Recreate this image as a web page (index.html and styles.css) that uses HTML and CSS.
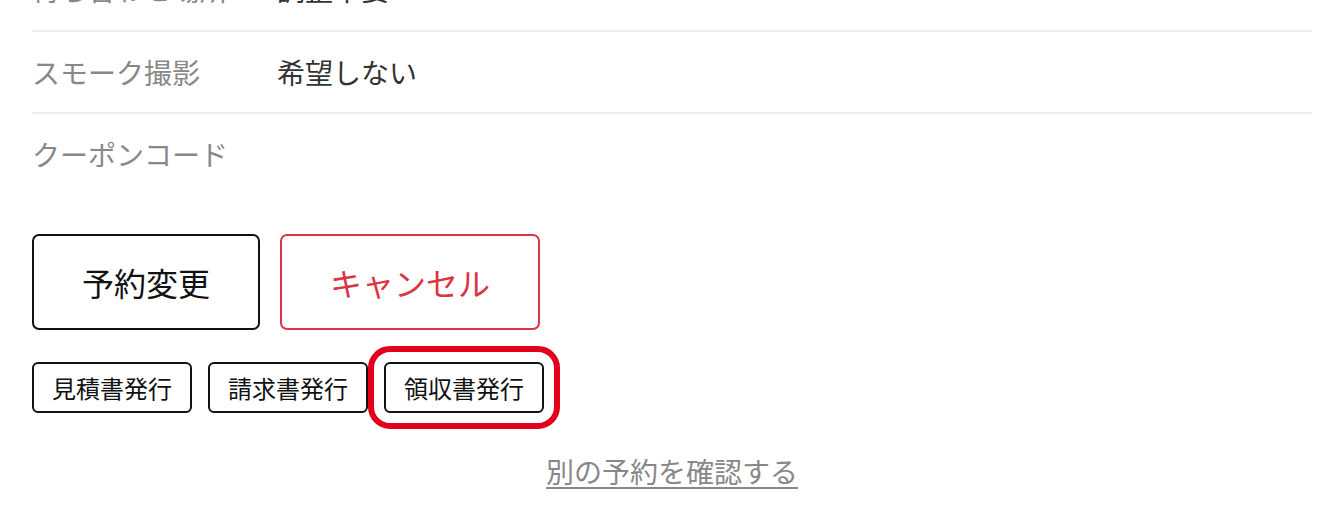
FILE: index.html
```html
<!DOCTYPE html>
<html lang="ja">
<head>
<meta charset="utf-8">
<title>予約確認</title>
<link rel="stylesheet" href="styles.css">
</head>
<body>
<main class="page">
  <dl class="details">
    <div class="row">
      <dt class="label">待ち合わせ場所</dt>
      <dd class="value">調整不要</dd>
    </div>
    <div class="row">
      <dt class="label">スモーク撮影</dt>
      <dd class="value">希望しない</dd>
    </div>
    <div class="row">
      <dt class="label">クーポンコード</dt>
      <dd class="value"></dd>
    </div>
  </dl>

  <div class="main-actions">
    <button class="btn-large">予約変更</button>
    <button class="btn-large btn-danger">キャンセル</button>
  </div>

  <div class="doc-actions">
    <button class="btn-small">見積書発行</button>
    <button class="btn-small">請求書発行</button>
    <button class="btn-small btn-highlight">領収書発行</button>
  </div>

  <div class="other">
    <a class="other-link" href="#">別の予約を確認する</a>
  </div>
</main>
</body>
</html>
```

FILE: styles.css
```css
* {
  box-sizing: border-box;
}

html, body {
  margin: 0;
  padding: 0;
  background: #fff;
}

body {
  font-family: "Noto Sans CJK JP", "Noto Sans", sans-serif;
  color: #222;
  overflow: hidden;
}

.page {
  padding: 0 32px;
}

.details {
  margin: -50px 0 0 0;
}

.row {
  display: grid;
  grid-template-columns: 245px 1fr;
  align-items: center;
  height: 82px;
  border-top: 2px solid #ececec;
}

.row:first-child {
  border-top: none;
  height: 80px;
  padding-bottom: 3px;
}

.label {
  margin: 0;
  font-size: 28px;
  line-height: 40px;
  color: #888;
}

.value {
  margin: 0;
  font-size: 28px;
  line-height: 40px;
  color: #333;
}

.main-actions {
  display: flex;
  gap: 20px;
  margin-top: 40px;
}

.btn-large {
  font-family: inherit;
  font-size: 32px;
  line-height: 44px;
  height: 96px;
  padding: 0 48px;
  background: #fff;
  color: #111;
  border: 2px solid #111;
  border-radius: 7px;
}

.btn-danger {
  color: #dc3545;
  border-color: #dc3545;
}

.doc-actions {
  display: flex;
  gap: 16px;
  margin-top: 32px;
}

.btn-small {
  font-family: inherit;
  font-size: 24px;
  line-height: 31px;
  padding: 8px 18px;
  background: #fff;
  color: #111;
  border: 2px solid #111;
  border-radius: 6px;
}

.btn-highlight {
  outline: 6px solid #e2001a;
  outline-offset: 10px;
}

.other {
  display: flex;
  justify-content: center;
  margin-top: 38px;
}

.other-link {
  font-size: 28px;
  line-height: 40px;
  color: #888;
  text-decoration: underline;
  text-decoration-thickness: 2px;
  text-underline-offset: 4px;
}
```
